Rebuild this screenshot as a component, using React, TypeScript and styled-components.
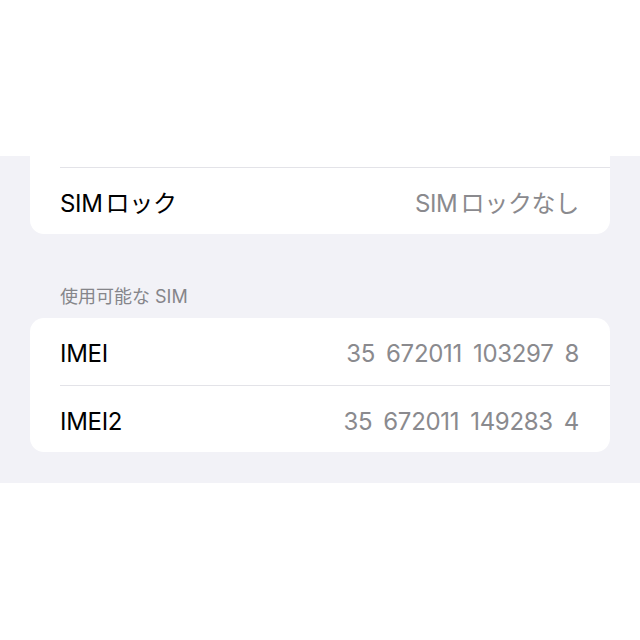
import styled, { createGlobalStyle } from "styled-components";

const GlobalStyle = createGlobalStyle`
  html, body {
    margin: 0;
    padding: 0;
    background: #ffffff;
  }
  body {
    font-family: "Inter", "Noto Sans CJK JP", sans-serif;
    -webkit-font-smoothing: antialiased;
    text-autospace: normal;
  }
`;

type Item = { label: string; value: string };

const lockRows: Item[] = [{ label: "SIMロック", value: "SIMロックなし" }];

const simRows: Item[] = [
  { label: "IMEI", value: "35 672011 103297 8" },
  { label: "IMEI2", value: "35 672011 149283 4" },
];

export default function App() {
  return (
    <>
      <GlobalStyle />
      <Page>
        <TopSpace />
        <Grouped>
          <Card $cutTop>
            <CutRow />
            {lockRows.map((r) => (
              <Row key={r.label}>
                <Label>{r.label}</Label>
                <Value>{r.value}</Value>
              </Row>
            ))}
          </Card>
          <SectionHeader>使用可能な SIM</SectionHeader>
          <Card>
            {simRows.map((r) => (
              <Row key={r.label}>
                <Label>{r.label}</Label>
                <Value>{r.value}</Value>
              </Row>
            ))}
          </Card>
        </Grouped>
      </Page>
    </>
  );
}

const Page = styled.div`
  width: 640px;
  min-height: 640px;
  display: flex;
  flex-direction: column;
  background: #ffffff;
`;

const TopSpace = styled.div`
  height: 156px;
  background: #ffffff;
`;

const Grouped = styled.div`
  background: #f2f2f7;
  padding: 0 30px 31px;
  display: flex;
  flex-direction: column;
`;

const Card = styled.div<{ $cutTop?: boolean }>`
  background: #ffffff;
  border-radius: ${(p) => (p.$cutTop ? "0 0 14px 14px" : "14px")};
  display: flex;
  flex-direction: column;
`;

const CutRow = styled.div`
  height: 11px;
`;

const Row = styled.div`
  height: 67px;
  margin-left: 30px;
  padding: 5px 31px 0 0;
  display: flex;
  align-items: center;
  justify-content: space-between;
  box-sizing: border-box;
  & + & {
    border-top: 1px solid #e3e3e8;
  }
  ${CutRow} + & {
    border-top: 1px solid #e3e3e8;
  }
`;

const Label = styled.span`
  font-size: 24px;
  line-height: 28px;
  color: #000000;
  letter-spacing: -0.3px;
`;

const Value = styled.span`
  font-size: 24px;
  line-height: 28px;
  color: #8a8a8e;
  letter-spacing: -0.3px;
  word-spacing: 4.5px;
`;

const SectionHeader = styled.div`
  height: 84px;
  box-sizing: border-box;
  padding: 52px 0 0 30px;
  font-size: 18px;
  line-height: 22px;
  color: #85858a;
`;
